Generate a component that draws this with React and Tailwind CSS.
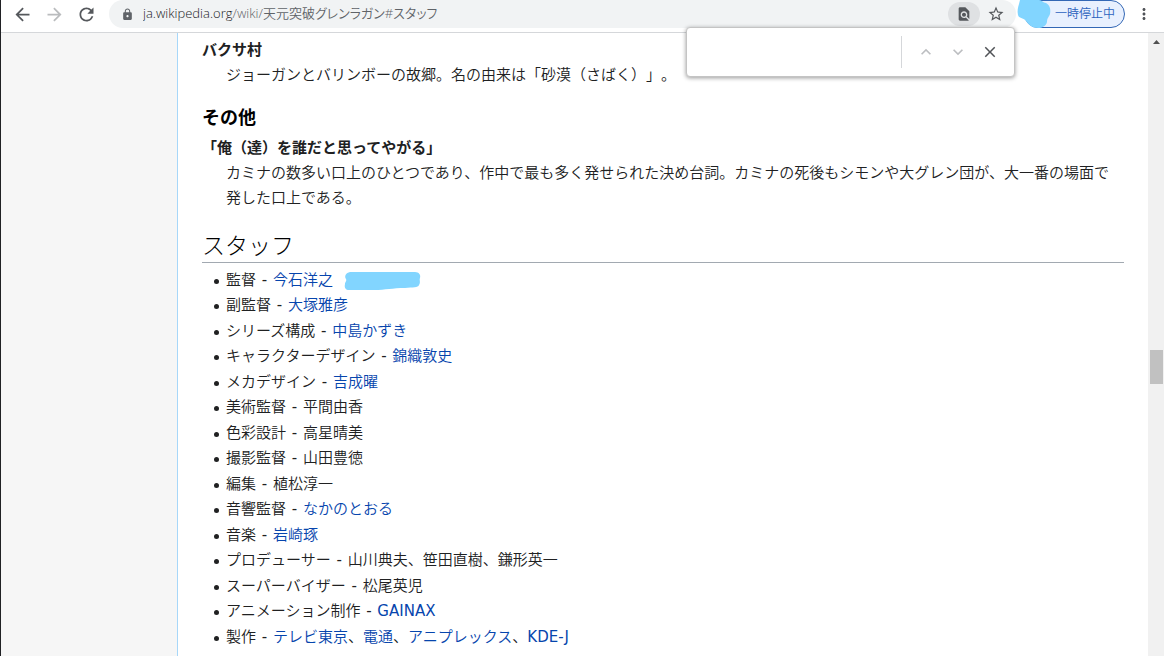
import { useState } from "react";
import {
  MdArrowBack,
  MdArrowForward,
  MdRefresh,
  MdLock,
  MdFindInPage,
  MdStarBorder,
  MdMoreVert,
  MdKeyboardArrowUp,
  MdKeyboardArrowDown,
  MdClose,
} from "react-icons/md";

const staff = [
  { role: "監督", people: ["今石洋之"], linked: true, marked: true },
  { role: "副監督", people: ["大塚雅彦"], linked: true },
  { role: "シリーズ構成", people: ["中島かずき"], linked: true },
  { role: "キャラクターデザイン", people: ["錦織敦史"], linked: true },
  { role: "メカデザイン", people: ["吉成曜"], linked: true },
  { role: "美術監督", people: ["平間由香"] },
  { role: "色彩設計", people: ["高星晴美"] },
  { role: "撮影監督", people: ["山田豊徳"] },
  { role: "編集", people: ["植松淳一"] },
  { role: "音響監督", people: ["なかのとおる"], linked: true },
  { role: "音楽", people: ["岩崎琢"], linked: true },
  { role: "プロデューサー", people: ["山川典夫", "笹田直樹", "鎌形英一"] },
  { role: "スーパーバイザー", people: ["松尾英児"] },
  { role: "アニメーション制作", people: ["GAINAX"], linked: true },
  {
    role: "製作",
    people: ["テレビ東京", "電通", "アニプレックス", "KDE-J"],
    linked: true,
  },
];

// Latin names need the regular weight, the light one is too thin
const isLatin = (name) => /^[A-Z-]+$/.test(name);

function FindBar() {
  const [query, setQuery] = useState("");

  return (
    <div className="absolute top-[27px] right-[149px] z-10 flex h-[50px] w-[329px] items-center rounded border border-[#c4c4c4] bg-white pr-2 shadow-[0_1px_4px_rgba(0,0,0,0.4)]">
      <input
        type="text"
        aria-label="ページ内を検索"
        value={query}
        onChange={(e) => setQuery(e.target.value)}
        className="h-8 min-w-0 flex-1 px-4 text-xs outline-none"
      />
      <div className="mr-2 h-8 w-px bg-[#d5d7da]" />
      <button type="button" aria-label="前へ" className="flex w-8 justify-center text-[#bcbec1]">
        <MdKeyboardArrowUp size={20} />
      </button>
      <button type="button" aria-label="次へ" className="flex w-8 justify-center text-[#bcbec1]">
        <MdKeyboardArrowDown size={20} />
      </button>
      <button type="button" aria-label="閉じる" className="flex w-8 justify-center text-[#505357]">
        <MdClose size={18} />
      </button>
    </div>
  );
}

function Toolbar() {
  return (
    <header className="relative flex h-[33px] shrink-0 items-start border-b border-[#d5d7da] bg-white pl-[5px] pr-[9px]">
      <button type="button" aria-label="戻る" className="flex h-7 w-8 items-center justify-center text-[#55585c]">
        <MdArrowBack size={21} />
      </button>
      <button type="button" aria-label="進む" className="flex h-7 w-8 items-center justify-center text-[#babcbe]">
        <MdArrowForward size={21} />
      </button>
      <button type="button" aria-label="再読み込み" className="flex h-7 w-8 items-center justify-center text-[#55585c]">
        <MdRefresh size={21} />
      </button>

      {/* Address bar */}
      <div className="ml-[7px] flex h-7 min-w-0 flex-1 items-center rounded-full bg-[#f1f3f4] pl-3 pr-1">
        <MdLock size={13} className="shrink-0 text-[#5f6368]" />
        <div
          role="textbox"
          aria-label="アドレス"
          tabIndex={0}
          className="ml-[9px] flex-1 truncate font-['Open_Sans','Noto_Sans_CJK_JP',sans-serif] text-[13px] text-[#5f6368] [font-feature-settings:'palt']"
        >
          <span className="text-[#202124]">ja.wikipedia.org</span>
          /wiki/天元突破グレンラガン#スタッフ
        </div>
        <button type="button" aria-label="検索" className="flex h-6 w-8 items-center justify-center rounded-full bg-[#dfe1e3] text-[#55585c]">
          <MdFindInPage size={16} />
        </button>
        <button type="button" aria-label="ブックマーク" className="flex h-6 w-8 items-center justify-center text-[#55585c]">
          <MdStarBorder size={18} />
        </button>
      </div>

      {/* Profile chip */}
      <button
        type="button"
        className="relative ml-2 h-7 w-[101px] rounded-full border border-[#3367b5] bg-[#e8f0fe] pr-[9px] text-right text-xs text-[#2b62bd]"
      >
        <svg className="absolute -top-px -left-2 h-7 w-[34px]" viewBox="0 0 34 28" fill="#82d5ff">
          <path d="M3 0H22C25 0 26 3 29 3C33 5 34 10 33 14C32 17 30 18 30 22C29 26 25 28 21 28C15 28 12 25 9 21C6 17 2 19 1 15C0 11 1 7 2 4Z" />
        </svg>
        一時停止中
      </button>
      <button type="button" aria-label="メニュー" className="ml-2 flex h-7 w-[22px] items-center justify-center text-[#505357]">
        <MdMoreVert size={18} />
      </button>

      <FindBar />
    </header>
  );
}

function StaffItem({ role, people, linked, marked }) {
  return (
    <li className="flex items-center before:mr-[7px] before:ml-3 before:mt-px before:size-[5px] before:rounded-full before:bg-[#202122] even:mb-px">
      <span>
        {role}
        <span className="px-px font-normal"> - </span>
        {people.map((name, i) => (
          <span key={name}>
            {i > 0 && "、"}
            {linked ? (
              <a
                href="#staff"
                className={isLatin(name) ? "font-normal text-[#0645ad]" : "text-[#0645ad]"}
              >
                {name}
              </a>
            ) : (
              name
            )}
          </span>
        ))}
      </span>
      {marked && (
        <svg className="ml-[11px] h-5 w-[77px]" viewBox="0 0 77 20" fill="#82d5ff">
          <path d="M6 1H71C75 1 77 4 76 7C75 9 77 11 75 14C74 17 69 16 61 17C48 17 42 19 30 19H5C2 19 0 17 1 13C1 11 3 10 2 8C0 5 2 2 6 1Z" />
        </svg>
      )}
    </li>
  );
}

function Article() {
  return (
    <main className="min-w-0 flex-1 overflow-hidden border-l border-[#a7d7f9] bg-white px-6 pt-[5px] text-[15px] leading-[25px] text-[#202122] [text-spacing-trim:space-all]">
      <dl>
        <dt className="font-bold">バクサ村</dt>
        <dd className="ml-6">
          ジョーガンとバリンボーの故郷。名の由来は「砂漠（さばく）」。
        </dd>
      </dl>
      <h3 className="mt-4 text-lg leading-[27px] font-bold text-black">その他</h3>
      <dl className="mt-[5px]">
        <dt className="font-bold">「俺（達）を誰だと思ってやがる」</dt>
        <dd className="mr-2 ml-6">
          カミナの数多い口上のひとつであり、作中で最も多く発せられた決め台詞。カミナの死後もシモンや大グレン団が、大一番の場面で発した口上である。
        </dd>
      </dl>
      <h2 id="staff" className="mt-[19px] border-b border-[#a2a9b1] text-[23px] font-light leading-8 text-black">
        スタッフ
      </h2>
      <ul className="mt-[5px]">
        {staff.map((item) => (
          <StaffItem key={item.role} {...item} />
        ))}
      </ul>
    </main>
  );
}

export default function App() {
  return (
    <div className="flex h-screen flex-col overflow-hidden border-l border-[#202124] bg-white font-['DejaVu_Sans','Noto_Sans_CJK_JP',sans-serif] font-[350]">
      <Toolbar />
      <div className="flex min-h-0 flex-1">
        <aside className="w-44 shrink-0 bg-[#f6f6f6]" />
        <Article />
        {/* Scrollbar */}
        <div className="flex w-4 shrink-0 flex-col items-center bg-[#f1f1f1]">
          <svg className="mt-[7px] h-1 w-[7px]" viewBox="0 0 7 4" fill="#505050">
            <path d="M0 4L3.5 0L7 4Z" />
          </svg>
          <div className="mt-[306px] h-[34px] w-[13px] bg-[#c1c1c1]" />
        </div>
      </div>
    </div>
  );
}
